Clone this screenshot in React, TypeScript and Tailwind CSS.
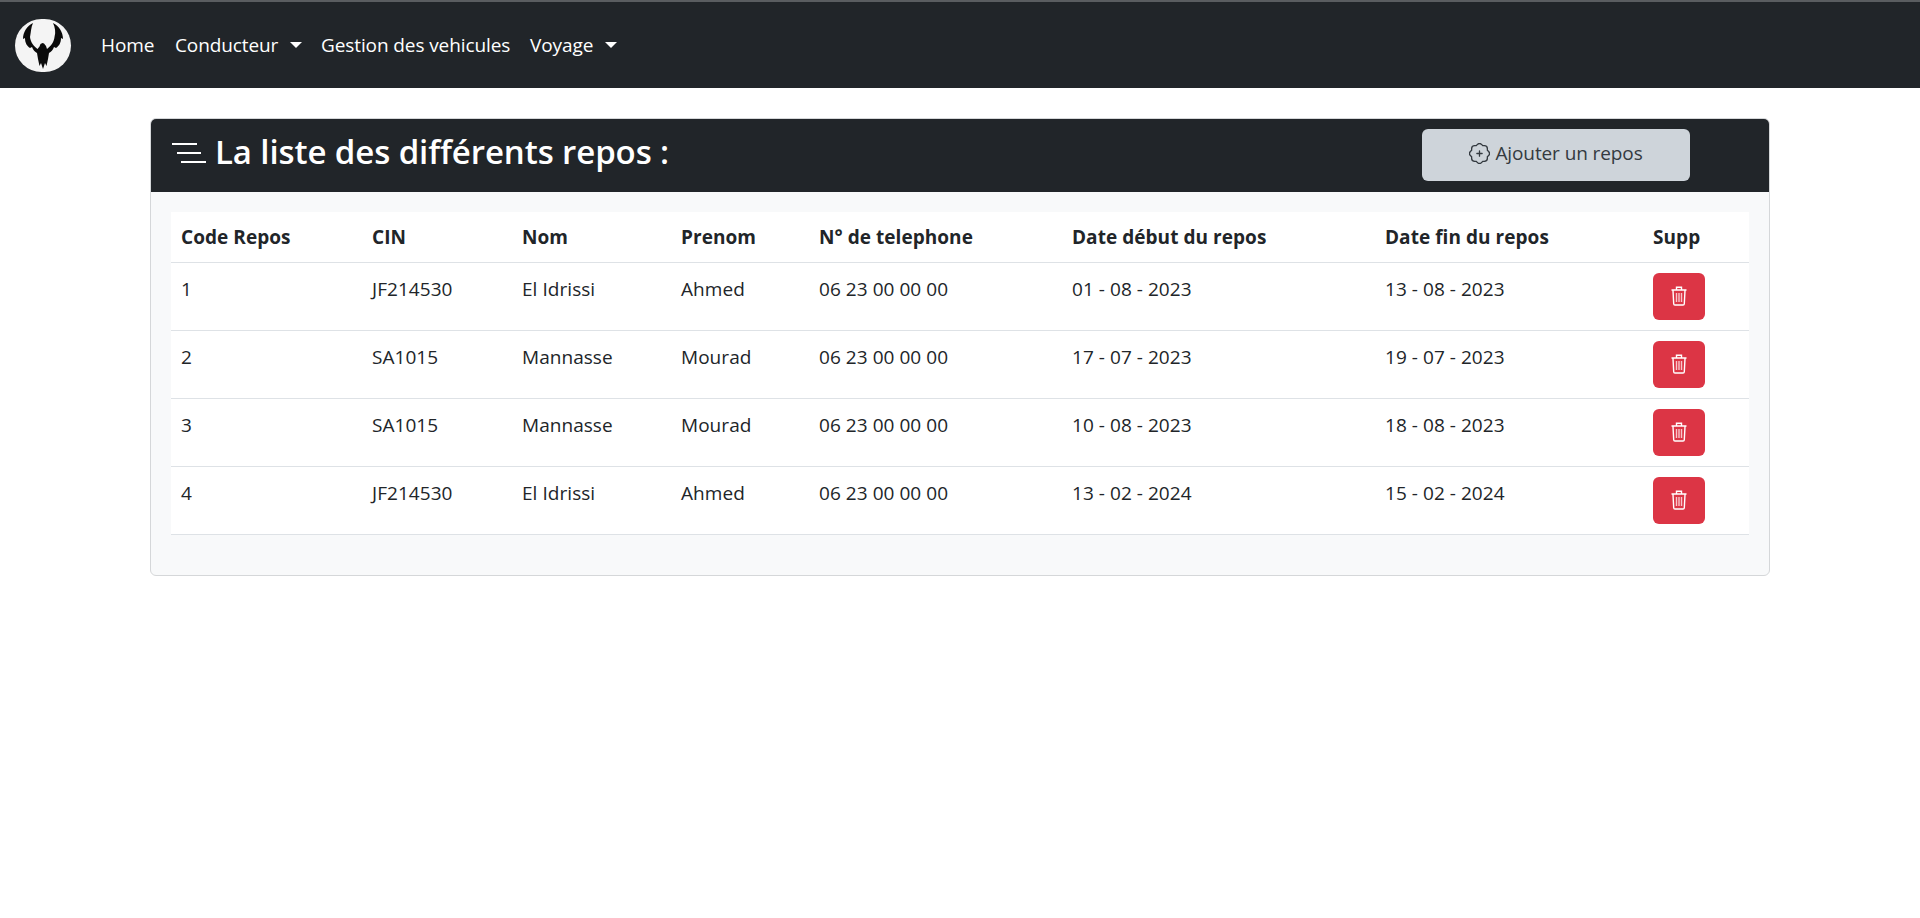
import { BsPatchPlus } from 'react-icons/bs';

const columns = [
  { label: 'Code Repos', width: 'w-[191px]' },
  { label: 'CIN', width: 'w-[150px]' },
  { label: 'Nom', width: 'w-[159px]' },
  { label: 'Prenom', width: 'w-[138px]' },
  { label: 'N° de telephone', width: 'w-[253px]' },
  { label: 'Date début du repos', width: 'w-[313px]' },
  { label: 'Date fin du repos', width: 'w-[268px]' },
  { label: 'Supp', width: 'w-[106px]' },
];

const rows = [
  { code: '1', cin: 'JF214530', nom: 'El Idrissi', prenom: 'Ahmed', tel: '06 23 00 00 00', debut: '01 - 08 - 2023', fin: '13 - 08 - 2023' },
  { code: '2', cin: 'SA1015', nom: 'Mannasse', prenom: 'Mourad', tel: '06 23 00 00 00', debut: '17 - 07 - 2023', fin: '19 - 07 - 2023' },
  { code: '3', cin: 'SA1015', nom: 'Mannasse', prenom: 'Mourad', tel: '06 23 00 00 00', debut: '10 - 08 - 2023', fin: '18 - 08 - 2023' },
  { code: '4', cin: 'JF214530', nom: 'El Idrissi', prenom: 'Ahmed', tel: '06 23 00 00 00', debut: '13 - 02 - 2024', fin: '15 - 02 - 2024' },
];

function Logo() {
  return (
    <div className="w-[56px] h-[53px] rounded-full bg-[#f4f4f4] flex items-center justify-center">
      <svg viewBox="0 0 56 53" className="w-[56px] h-[53px]">
        <path
          fill="#0b0b0b"
          d="M18 4C12 7 8 13 8 20l2-1c0 5 2 8 5 10l2-1c1 3 3 5 5 6l1 6 1.5 7 1.5-3 2 6 2-6 1.5 3 1.5-7 1-6c2-1 4-3 5-6l2 1c3-2 5-5 5-10l2 1c0-7-4-13-10-16 2 4 3 9 1.500 14-.5 5-3.500 9-7.500 12l-1-3-2-2.500-1.500-.5-2 1-1 2.500-2 2.500c-4-3-7-7-7.500-12C16 13 16 8 18 4z"
        />
      </svg>
    </div>
  );
}

function Caret() {
  return <span className="ml-[12px] w-0 h-0 border-x-[6px] border-x-transparent border-t-[6px] border-t-white" />;
}

function TrashIcon() {
  return (
    <svg viewBox="0 0 16 20" className="w-[16px] h-[20px]" fill="none" stroke="white" strokeWidth="1.4">
      <path d="M0.5 4h15M5.5 3.5V1.2h5v2.3M2 4.5l.7 13.2c0 .7.6 1.3 1.3 1.3h8c.7 0 1.3-.6 1.3-1.3L14 4.5" />
      <path stroke="#f9c6cc" d="M5.5 7v9M8 7v9M10.500 7v9" />
    </svg>
  );
}

export default function App() {
  return (
    <div className="min-h-[918px] bg-white font-['Open_Sans','Noto_Sans',sans-serif] text-[#212529]">
      <nav className="h-[88px] bg-[#212529] border-t-2 border-[#5a5d60] flex items-center pl-[15px]">
        <Logo />
        <div className="ml-[30px] flex items-center text-[19px] tracking-[-0.1px] text-white">
          <a className="w-[74px]">Home</a>
          <a className="w-[146px] flex items-center">Conducteur<Caret /></a>
          <a className="w-[209px]">Gestion des vehicules</a>
          <a className="flex items-center">Voyage<Caret /></a>
        </div>
      </nav>

      <div className="mx-[150px] mt-[30px] h-[458px] rounded-[6px] border border-[#d5d7d9] bg-[#f8f9fa] overflow-hidden">
        <div className="h-[73px] bg-[#212529] flex items-center pl-[21px] pr-[79px] text-white">
          <svg viewBox="0 0 34 22" className="w-[34px] h-[22px] mr-[9px] mt-[-6px]" stroke="white" strokeWidth="2" fill="none">
            <path d="M0 2h25M5 11h24M9 20h25" />
          </svg>
          <h2 className="text-[33px] leading-[40px] font-semibold tracking-[-0.1px] mt-[-7px]">La liste des différents repos :</h2>
          <button className="ml-auto mt-[-2px] w-[268px] h-[52px] rounded-[6px] bg-[#ced4da] text-[#343a40] text-[19px] tracking-[-0.1px] flex items-center justify-center gap-[5px] pb-[2px]">
            <BsPatchPlus className="w-[21px] h-[21px]" />
            Ajouter un repos
          </button>
        </div>

        <div className="px-[20px] pt-[20px]">
          <table className="w-[1578px] table-fixed bg-white text-[19px] tracking-[0.05px]">
            <thead>
              <tr className="h-[50px] border-b border-[#dee2e6]">
                {columns.map((col) => (
                  <th key={col.label} className={`${col.width} px-[10px] text-left font-bold`}>{col.label}</th>
                ))}
              </tr>
            </thead>
            <tbody>
              {rows.map((row) => (
                <tr key={row.code + row.debut} className="h-[68px] border-b border-[#dee2e6] align-top">
                  <td className="px-[10px] pt-[12px]">{row.code}</td>
                  <td className="px-[10px] pt-[12px]">{row.cin}</td>
                  <td className="px-[10px] pt-[12px]">{row.nom}</td>
                  <td className="px-[10px] pt-[12px]">{row.prenom}</td>
                  <td className="px-[10px] pt-[12px]">{row.tel}</td>
                  <td className="px-[10px] pt-[12px]">{row.debut}</td>
                  <td className="px-[10px] pt-[12px]">{row.fin}</td>
                  <td className="px-[10px] pt-[10px]">
                    <button className="w-[52px] h-[47px] rounded-[6px] bg-[#dc3545] text-white flex items-center justify-center">
                      <TrashIcon />
                    </button>
                  </td>
                </tr>
              ))}
            </tbody>
          </table>
        </div>
      </div>
    </div>
  );
}
